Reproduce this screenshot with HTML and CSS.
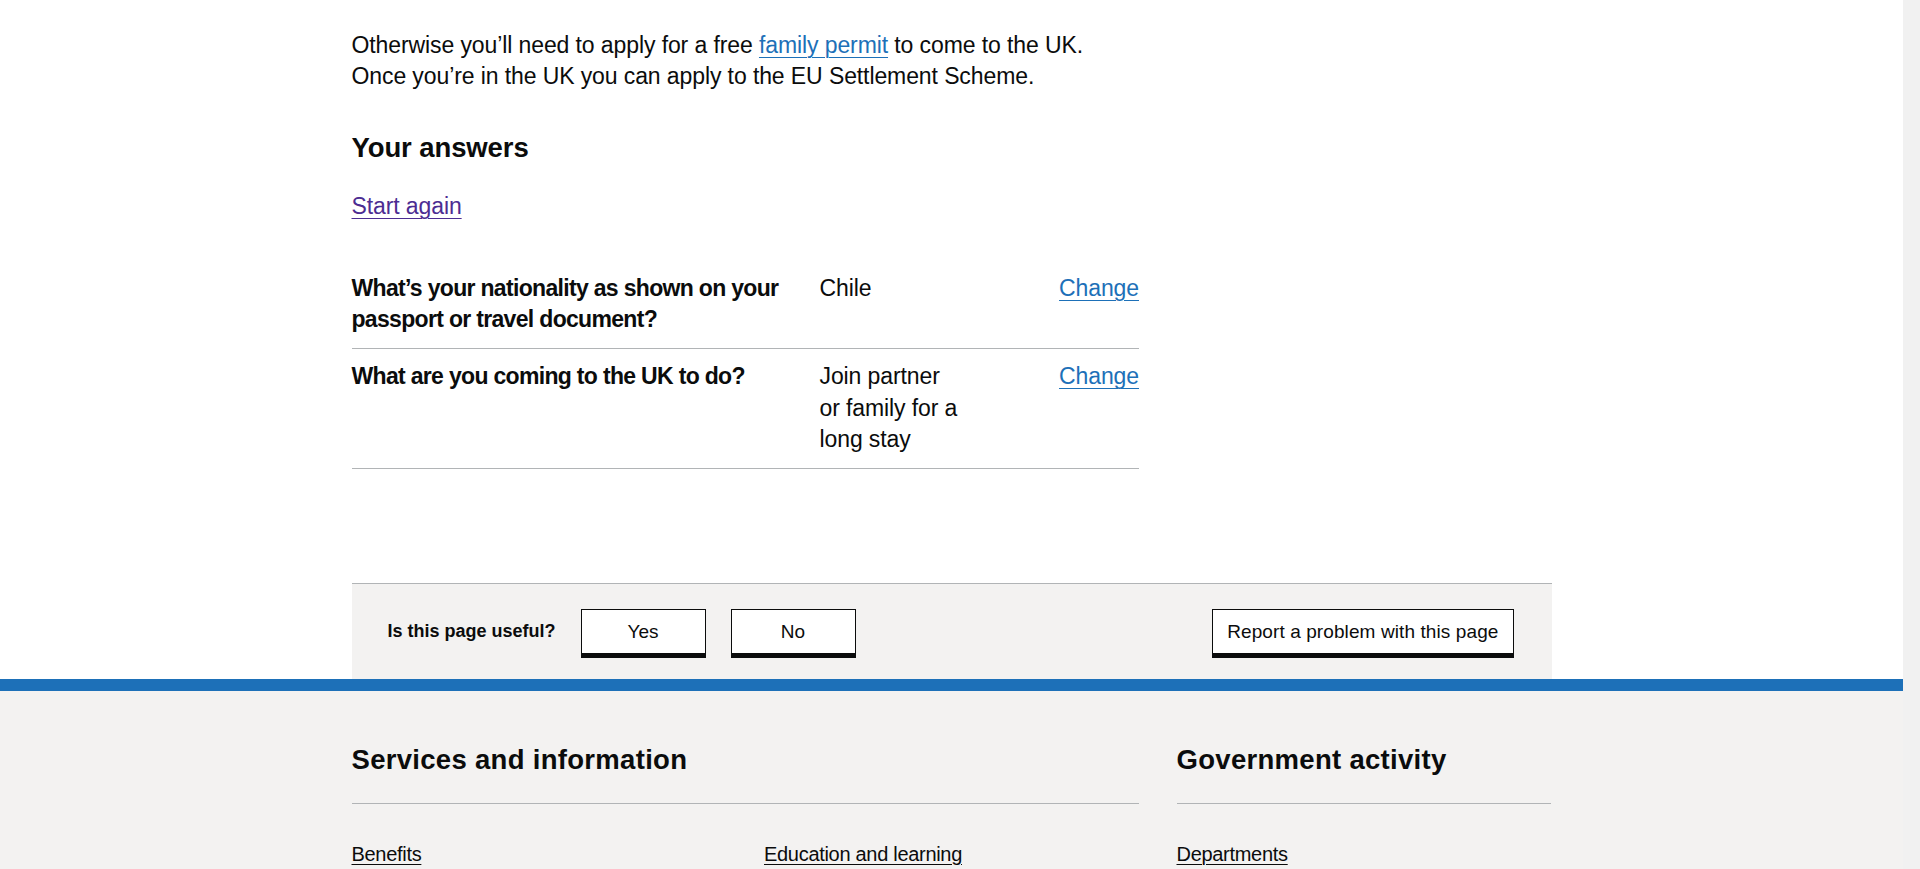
FILE: index.html
```html
<!DOCTYPE html>
<html lang="en">
<head>
<meta charset="utf-8">
<title>Your answers – GOV.UK</title>
<link rel="stylesheet" href="styles.css">
</head>
<body>
<main class="width-container main">
  <div class="grid-row">
    <div class="col-two-thirds">
      <p class="body">Otherwise you’ll need to apply for a free <a class="link" href="#">family permit</a> to come to the UK. Once you’re in the UK you can apply to the EU Settlement Scheme.</p>
      <h2 class="heading-m">Your answers</h2>
      <p class="body body-start"><a class="link link-visited" href="#">Start again</a></p>
      <dl class="summary">
        <div class="summary-row">
          <dt class="summary-key">What’s your nationality as shown on your passport or travel document?</dt>
          <dd class="summary-value">Chile</dd>
          <dd class="summary-actions"><a class="link" href="#">Change</a></dd>
        </div>
        <div class="summary-row">
          <dt class="summary-key">What are you coming to the UK to do?</dt>
          <dd class="summary-value">Join partner or family for a long stay</dd>
          <dd class="summary-actions"><a class="link" href="#">Change</a></dd>
        </div>
      </dl>
    </div>
  </div>
  <div class="feedback">
    <div class="feedback-prompt">
      <span class="feedback-question">Is this page useful?</span>
      <ul class="feedback-options">
        <li><button class="feedback-btn feedback-btn-choice" type="button">Yes</button></li>
        <li><button class="feedback-btn feedback-btn-choice" type="button">No</button></li>
      </ul>
    </div>
    <button class="feedback-btn" type="button">Report a problem with this page</button>
  </div>
</main>
<footer class="footer">
  <div class="width-container">
    <div class="grid-row">
      <div class="col-two-thirds">
        <h2 class="footer-heading">Services and information</h2>
        <ul class="footer-list footer-list-2">
          <li><a class="footer-link" href="#">Benefits</a></li>
          <li><a class="footer-link" href="#">Births, deaths, marriages and care</a></li>
          <li><a class="footer-link" href="#">Business and self-employed</a></li>
          <li><a class="footer-link" href="#">Childcare and parenting</a></li>
          <li><a class="footer-link" href="#">Citizenship and living in the UK</a></li>
          <li><a class="footer-link" href="#">Crime, justice and the law</a></li>
          <li><a class="footer-link" href="#">Disabled people</a></li>
          <li><a class="footer-link" href="#">Driving and transport</a></li>
          <li><a class="footer-link" href="#">Education and learning</a></li>
          <li><a class="footer-link" href="#">Employing people</a></li>
          <li><a class="footer-link" href="#">Environment and countryside</a></li>
          <li><a class="footer-link" href="#">Housing and local services</a></li>
          <li><a class="footer-link" href="#">Money and tax</a></li>
          <li><a class="footer-link" href="#">Passports, travel and living abroad</a></li>
          <li><a class="footer-link" href="#">Visas and immigration</a></li>
          <li><a class="footer-link" href="#">Working, jobs and pensions</a></li>
        </ul>
      </div>
      <div class="col-one-third">
        <h2 class="footer-heading">Government activity</h2>
        <ul class="footer-list">
          <li><a class="footer-link" href="#">Departments</a></li>
          <li><a class="footer-link" href="#">News</a></li>
          <li><a class="footer-link" href="#">Guidance and regulation</a></li>
          <li><a class="footer-link" href="#">Research and statistics</a></li>
          <li><a class="footer-link" href="#">Policy papers and consultations</a></li>
          <li><a class="footer-link" href="#">Transparency</a></li>
          <li><a class="footer-link" href="#">How government works</a></li>
          <li><a class="footer-link" href="#">Get involved</a></li>
        </ul>
      </div>
    </div>
    <div class="footer-meta">
      <ul class="footer-meta-list">
        <li><a class="footer-link" href="#">Help</a></li>
        <li><a class="footer-link" href="#">Privacy</a></li>
        <li><a class="footer-link" href="#">Cookies</a></li>
        <li><a class="footer-link" href="#">Accessibility statement</a></li>
        <li><a class="footer-link" href="#">Contact</a></li>
        <li><a class="footer-link" href="#">Terms and conditions</a></li>
        <li><a class="footer-link" href="#">Rhestr o Wasanaethau Cymraeg</a></li>
        <li><a class="footer-link" href="#">Government Digital Service</a></li>
      </ul>
      <p class="footer-licence">All content is available under the <a class="footer-link" href="#">Open Government Licence v3.0</a>, except where otherwise stated</p>
    </div>
  </div>
</footer>
</body>
</html>
```
FILE: styles.css
```css
html {
  font-family: "Liberation Sans", Arial, sans-serif;
  color: #0b0c0c;
  background: #f1f1f1;
  overflow-y: scroll;
}

/* keep the same gutter the reference's vertical scrollbar takes */
body {
  margin: 0 17px 0 0;
  background: #ffffff;
}

::-webkit-scrollbar {
  width: 17px;
  background: #f1f1f1;
}

::-webkit-scrollbar-thumb {
  background: #c1c1c1;
  border: 2px solid #f1f1f1;
}

.width-container {
  max-width: 1200px;
  margin: 0 auto;
}

.main {
  padding-top: 30px;
}

.grid-row {
  display: flex;
  margin: 0 -18.75px;
}

.col-two-thirds {
  box-sizing: border-box;
  width: 66.6667%;
  padding: 0 18.75px;
}

.col-one-third {
  box-sizing: border-box;
  width: 33.3333%;
  padding: 0 18.75px;
}

.body {
  margin: 0 0 25px;
  font-size: 23px;
  line-height: 31.25px;
  letter-spacing: -0.1px;
}

.body-start {
  margin-bottom: 38px;
}

.heading-m {
  margin: 36px 0 25px;
  font-size: 27.5px;
  line-height: 37.5px;
  font-weight: 700;
  letter-spacing: -0.1px;
}

.link {
  color: #1d70b8;
  text-decoration: underline;
  text-decoration-thickness: 1.25px;
  text-underline-offset: 0.1578em;
}

.link-visited {
  color: #4c2c92;
}

.summary {
  margin: 38px 0 114px;
  font-size: 23px;
  line-height: 31.25px;
  letter-spacing: -0.1px;
}

.summary-row {
  display: grid;
  grid-template-columns: 468px 165px 1fr;
  border-bottom: 1px solid #b1b4b6;
}

.summary-key,
.summary-value,
.summary-actions {
  margin: 0;
  padding: 12.5px 25px 12.5px 0;
}

.summary-key {
  font-weight: 700;
  letter-spacing: -0.68px;
}

.summary-actions {
  padding-right: 0;
  text-align: right;
}

.feedback {
  display: flex;
  align-items: center;
  justify-content: space-between;
  padding: 25px 38px 25px 36px;
  background: #f3f2f1;
  border-top: 1px solid #b1b4b6;
}

.feedback-prompt {
  display: flex;
  align-items: center;
}

.feedback-question {
  font-size: 18px;
  line-height: 25px;
  font-weight: 700;
  margin-right: 25px;
}

.feedback-options {
  display: flex;
  gap: 25px;
  margin: 0;
  padding: 0;
  list-style: none;
}

.feedback-btn {
  box-sizing: border-box;
  height: 45px;
  padding: 0 14px;
  font-family: "Liberation Sans", Arial, sans-serif;
  font-size: 19px;
  line-height: 25px;
  letter-spacing: 0.1px;
  color: #0b0c0c;
  background: #ffffff;
  border: 1px solid #0b0c0c;
  border-radius: 0;
  box-shadow: 0 4px 0 #0b0c0c;
  cursor: pointer;
}

.feedback-btn-choice {
  width: 125px;
}

.footer {
  padding: 50px 0 60px;
  background: #f3f2f1;
  border-top: 12.5px solid #1d70b8;
}

.footer-heading {
  margin: 0 0 37.5px;
  padding-bottom: 25px;
  border-bottom: 1px solid #b1b4b6;
  font-size: 27.5px;
  line-height: 37.5px;
  font-weight: 700;
  letter-spacing: 0.3px;
}

.footer-list {
  margin: 0 0 50px;
  padding: 0;
  list-style: none;
  font-size: 20px;
  line-height: 25px;
  letter-spacing: -0.3px;
}

.footer-list li {
  margin-bottom: 18.75px;
}

.footer-list-2 {
  column-count: 2;
  column-gap: 37.5px;
}

.footer-link {
  color: #0b0c0c;
  text-decoration: underline;
  text-decoration-thickness: 1.25px;
  text-underline-offset: 0.1578em;
}

.footer-meta {
  padding-top: 30px;
  border-top: 1px solid #b1b4b6;
  font-size: 20px;
  line-height: 25px;
}

.footer-meta-list {
  display: flex;
  flex-wrap: wrap;
  gap: 12px 25px;
  margin: 0 0 30px;
  padding: 0;
  list-style: none;
}

.footer-licence {
  margin: 0;
}
```
